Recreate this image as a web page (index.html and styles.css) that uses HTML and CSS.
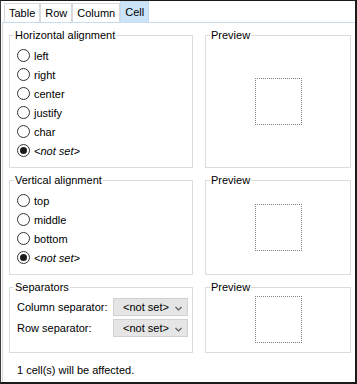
FILE: index.html
```html
<!DOCTYPE html>
<html lang="en">

<head>
    <meta charset="UTF-8">
    <title>Cell properties</title>
    <link rel="stylesheet" href="styles.css">
</head>

<body>
    <div class="dialog">
        <div class="tabs">
            <span class="tab">Table</span>
            <span class="tab">Row</span>
            <span class="tab">Column</span>
            <span class="tab active">Cell</span>
        </div>
        <div class="panel">
            <div class="grid">
                <fieldset class="group">
                    <legend>Horizontal alignment</legend>
                    <div class="options">
                        <label class="option"><input type="radio" name="halign">left</label>
                        <label class="option"><input type="radio" name="halign">right</label>
                        <label class="option"><input type="radio" name="halign">center</label>
                        <label class="option"><input type="radio" name="halign">justify</label>
                        <label class="option"><input type="radio" name="halign">char</label>
                        <label class="option"><input type="radio" name="halign" checked><i>&lt;not set&gt;</i></label>
                    </div>
                </fieldset>
                <fieldset class="group preview">
                    <legend>Preview</legend>
                    <div class="preview-area"><div class="cell-box"></div></div>
                </fieldset>

                <fieldset class="group">
                    <legend>Vertical alignment</legend>
                    <div class="options">
                        <label class="option"><input type="radio" name="valign">top</label>
                        <label class="option"><input type="radio" name="valign">middle</label>
                        <label class="option"><input type="radio" name="valign">bottom</label>
                        <label class="option"><input type="radio" name="valign" checked><i>&lt;not set&gt;</i></label>
                    </div>
                </fieldset>
                <fieldset class="group preview">
                    <legend>Preview</legend>
                    <div class="preview-area"><div class="cell-box"></div></div>
                </fieldset>

                <fieldset class="group">
                    <legend>Separators</legend>
                    <div class="separators">
                        <span>Column separator:</span>
                        <div class="combo"><span>&lt;not set&gt;</span>
                            <svg width="7" height="5" viewBox="0 0 7 5"><polyline points="0.5,1 3.5,4 6.5,1" fill="none" stroke="#5a5a5a" stroke-width="1.2"/></svg>
                        </div>
                        <span>Row separator:</span>
                        <div class="combo"><span>&lt;not set&gt;</span>
                            <svg width="7" height="5" viewBox="0 0 7 5"><polyline points="0.5,1 3.5,4 6.5,1" fill="none" stroke="#5a5a5a" stroke-width="1.2"/></svg>
                        </div>
                    </div>
                </fieldset>
                <fieldset class="group preview">
                    <legend>Preview</legend>
                    <div class="preview-area"><div class="cell-box"></div></div>
                </fieldset>
            </div>
            <p class="note">1 cell(s) will be affected.</p>
        </div>
    </div>
</body>

</html>
```

FILE: styles.css
```css
* {
    box-sizing: border-box;
    margin: 0;
    padding: 0;
    font-family: 'Liberation Sans', Arial, sans-serif;
}

body {
    background-color: white;
}

.dialog {
    width: 357px;
    height: 384px;
    border-top: 1px solid #1a1a1a;
    border-left: 1px solid #3c3c3c;
    border-right: 2px solid #1a1a1a;
    border-bottom: 2px solid #1a1a1a;
    font-size: 11px;
    color: #000;
    display: flex;
    flex-direction: column;
}

.tabs {
    display: flex;
    align-items: flex-end;
    height: 21px;
    padding-left: 3px;
}

.tab {
    height: 19px;
    line-height: 18px;
    padding: 0 4px;
    border: 1px solid #d9d9d9;
    border-bottom: none;
    background-color: #fff;
}

.tab.active {
    height: 21px;
    line-height: 20px;
    background-color: #cce4f7;
    border-color: #c3dbf1;
}

.panel {
    flex: 1;
    margin-left: 1px;
    border-top: 1px solid #c5dcf1;
    border-left: 1px solid #d9d9d9;
    padding: 5px 0 0 6px;
}

.grid {
    display: grid;
    grid-template-columns: 184px 146px;
    column-gap: 12px;
    row-gap: 5px;
}

.group {
    border: 1px solid #dcdcdc;
    min-width: 0;
}

.group legend {
    margin-left: 4px;
    padding: 0 1px;
    line-height: 14px;
}

.options {
    padding: 4px 0 7px 7px;
}

.option {
    display: flex;
    align-items: center;
    height: 19px;
}

.option input {
    appearance: none;
    width: 13px;
    height: 13px;
    margin: 0 4px 0 0;
    border: 1px solid #333;
    border-radius: 50%;
    background-color: #fff;
    display: grid;
    place-content: center;
}

.option input:checked::before {
    content: '';
    display: block;
    width: 7px;
    height: 7px;
    border-radius: 50%;
    background-color: #1a1a1a;
}

.separators {
    display: grid;
    grid-template-columns: 96px 75px;
    row-gap: 3px;
    align-items: center;
    padding: 4px 0 15px 7px;
}

.combo {
    height: 18px;
    border: 1px solid #d0d0d0;
    background-color: #e5e5e5;
    display: flex;
    align-items: center;
    justify-content: space-between;
    padding: 0 5px 0 9px;
}

.combo svg {
    margin-top: 2px;
}

.preview {
    display: flex;
    flex-direction: column;
}

.preview-area {
    flex: 1;
    display: flex;
    align-items: center;
    justify-content: center;
    margin-top: -7px;
}

.cell-box {
    width: 47px;
    height: 47px;
    border: 1px dotted #808080;
}

.note {
    margin: 10px 0 0 8px;
    line-height: 14px;
}
```
